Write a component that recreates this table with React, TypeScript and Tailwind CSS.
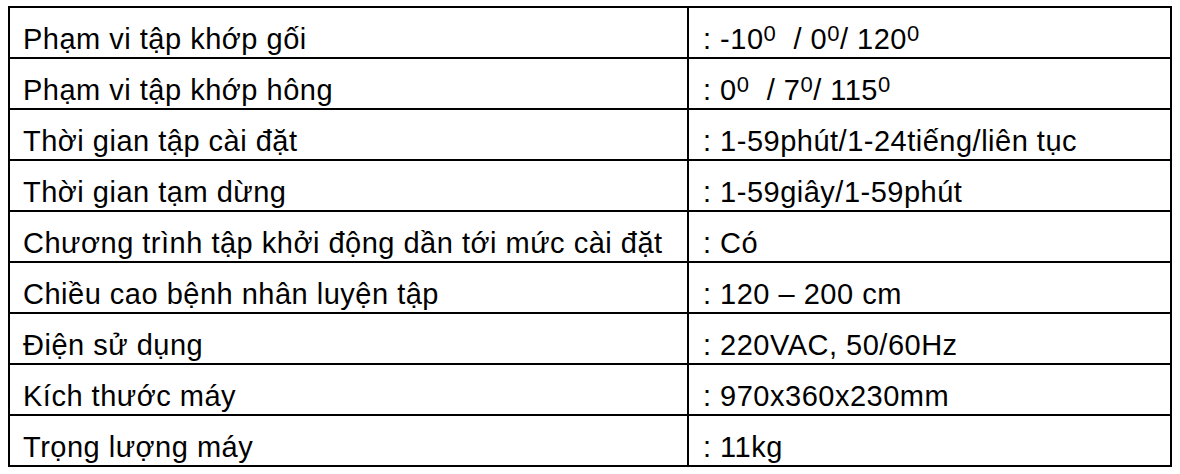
import React from 'react';

const Deg = () => <sup className="top-[-0.36em] text-[0.76em]">0</sup>;

const ROWS: { label: string; value: React.ReactNode }[] = [
  {
    label: 'Phạm vi tập khớp gối',
    value: (
      <>
        : -10<Deg />  / 0<Deg />/ 120<Deg />
      </>
    ),
  },
  {
    label: 'Phạm vi tập khớp hông',
    value: (
      <>
        : 0<Deg />  / 7<Deg />/ 115<Deg />
      </>
    ),
  },
  { label: 'Thời gian tập cài đặt', value: ': 1-59phút/1-24tiếng/liên tục' },
  { label: 'Thời gian tạm dừng', value: ': 1-59giây/1-59phút' },
  { label: 'Chương trình tập khởi động dần tới mức cài đặt', value: ': Có' },
  { label: 'Chiều cao bệnh nhân luyện tập', value: ': 120 – 200 cm' },
  { label: 'Điện sử dụng', value: ': 220VAC, 50/60Hz' },
  { label: 'Kích thước máy', value: ': 970x360x230mm' },
  { label: 'Trọng lượng máy', value: ': 11kg' },
];

export default function App() {
  return (
    <div className="w-[1180px] h-[474px] bg-white pt-[6px] pl-[8px] font-['Liberation_Sans',Arial,sans-serif] text-black">
      <table className="w-[1164px] table-fixed border-collapse border-2 border-black">
        <colgroup>
          <col className="w-[679px]" />
          <col />
        </colgroup>
        <tbody>
          {ROWS.map((row) => (
            <tr key={row.label} className="h-[51px]">
              <td className="border-2 border-black pl-[13px] pb-[3px] align-bottom text-[29px] tracking-[0.5px] leading-none whitespace-nowrap">
                {row.label}
              </td>
              <td className="border-2 border-black pl-[14px] pb-[3px] align-bottom text-[29px] tracking-[0.5px] leading-none whitespace-pre">
                {row.value}
              </td>
            </tr>
          ))}
        </tbody>
      </table>
    </div>
  );
}
